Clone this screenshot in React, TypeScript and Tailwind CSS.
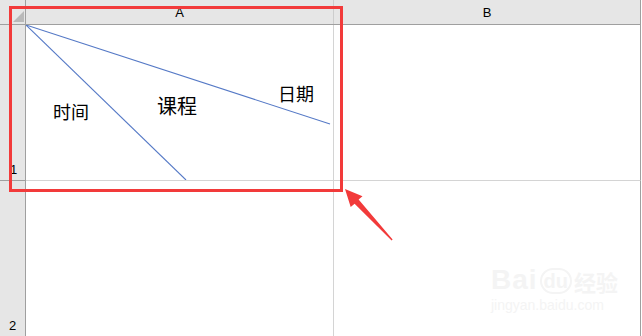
import React from "react";

export default function App() {
  const sans = { fontFamily: '"Liberation Sans", Arial, sans-serif' };
  const cjk = { fontFamily: '"Noto Sans CJK SC", "Noto Sans", sans-serif' };
  return (
    <div className="relative w-[642px] h-[336px] bg-white overflow-hidden" style={sans}>
      {/* header row */}
      <div className="flex h-[25px] bg-[#e6e6e6] border-b border-[#9f9f9f] w-[641px]">
        <div className="relative w-[26px] border-r border-[#9f9f9f] h-full">
          <svg className="absolute left-[13px] top-[11px]" width="11" height="11" viewBox="0 0 11 11">
            <polygon points="11,0 11,11 0,11" fill="#b9b9b9" />
          </svg>
        </div>
        <div className="w-[308px] border-r border-[#cdcdcd] flex items-center justify-center text-[13px] text-black pt-[1px]">
          A
        </div>
        <div className="w-[307px] border-r border-[#9f9f9f] flex items-center justify-center text-[13px] text-black pt-[1px]">
          B
        </div>
      </div>
      {/* row 1 */}
      <div className="flex h-[156px] w-[641px]">
        <div className="w-[26px] bg-[#e6e6e6] border-r border-b border-[#9f9f9f] flex items-end pl-[10px] pb-[1px] text-[13px] text-black">
          1
        </div>
        <div className="relative w-[308px] border-r border-b border-[#d4d4d4]">
          <svg className="absolute left-0 top-0" width="308" height="155" viewBox="0 0 308 155">
            <line x1="0" y1="0" x2="160" y2="155" stroke="#5579c6" strokeWidth="1.1" />
            <line x1="0" y1="0" x2="304" y2="99" stroke="#5579c6" strokeWidth="1.1" />
          </svg>
          <span className="absolute left-[27px] top-[77px] text-[18px] leading-[18px] text-black" style={cjk}>时间</span>
          <span className="absolute left-[131px] top-[71px] text-[20px] leading-[20px] text-black" style={cjk}>课程</span>
          <span className="absolute left-[252px] top-[59px] text-[18px] leading-[18px] text-black" style={cjk}>日期</span>
        </div>
        <div className="w-[307px] border-r border-b border-[#d4d4d4] border-r-[#9f9f9f]" />
      </div>
      {/* row 2 */}
      <div className="flex h-[155px] w-[641px]">
        <div className="w-[26px] bg-[#e6e6e6] border-r border-[#9f9f9f] flex items-end pl-[9px] pb-[1px] text-[13px] text-black">
          2
        </div>
        <div className="w-[308px] border-r border-[#d4d4d4]" />
        <div className="w-[307px] border-r border-[#9f9f9f]" />
      </div>

      {/* red highlight rectangle */}
      <div className="absolute left-[9px] top-[6px] w-[334px] h-[186px] border-[3px] border-[#f23a3a] pointer-events-none" />

      {/* red arrow */}
      <svg className="absolute left-0 top-0 pointer-events-none" width="642" height="336" viewBox="0 0 642 336">
        <polygon
          points="345,189 362.5,196.2 358.6,199.6 392.6,239.6 391.6,240.4 354.6,203.8 350.7,207"
          fill="#f23a3a"
        />
      </svg>

      {/* watermark */}
      <div className="absolute left-[491px] top-[266px] flex flex-col items-start pointer-events-none">
        <div className="flex items-end gap-[2px]">
          <span className="text-[28px] leading-[28px] font-bold text-[#f4f4f4] tracking-[1px]" style={sans}>Bai</span>
          <span className="text-[20px] leading-[22px] font-bold text-[#f4f4f4] rounded-full border-2 border-[#f4f4f4] px-[2px]" style={sans}>du</span>
          <span className="text-[22px] leading-[26px] font-bold text-[#f4f4f4]" style={cjk}>经验</span>
        </div>
        <span className="text-[14px] leading-[18px] text-[#f4f4f4] mt-[2px]" style={sans}>jingyan.baidu.com</span>
      </div>
    </div>
  );
}
